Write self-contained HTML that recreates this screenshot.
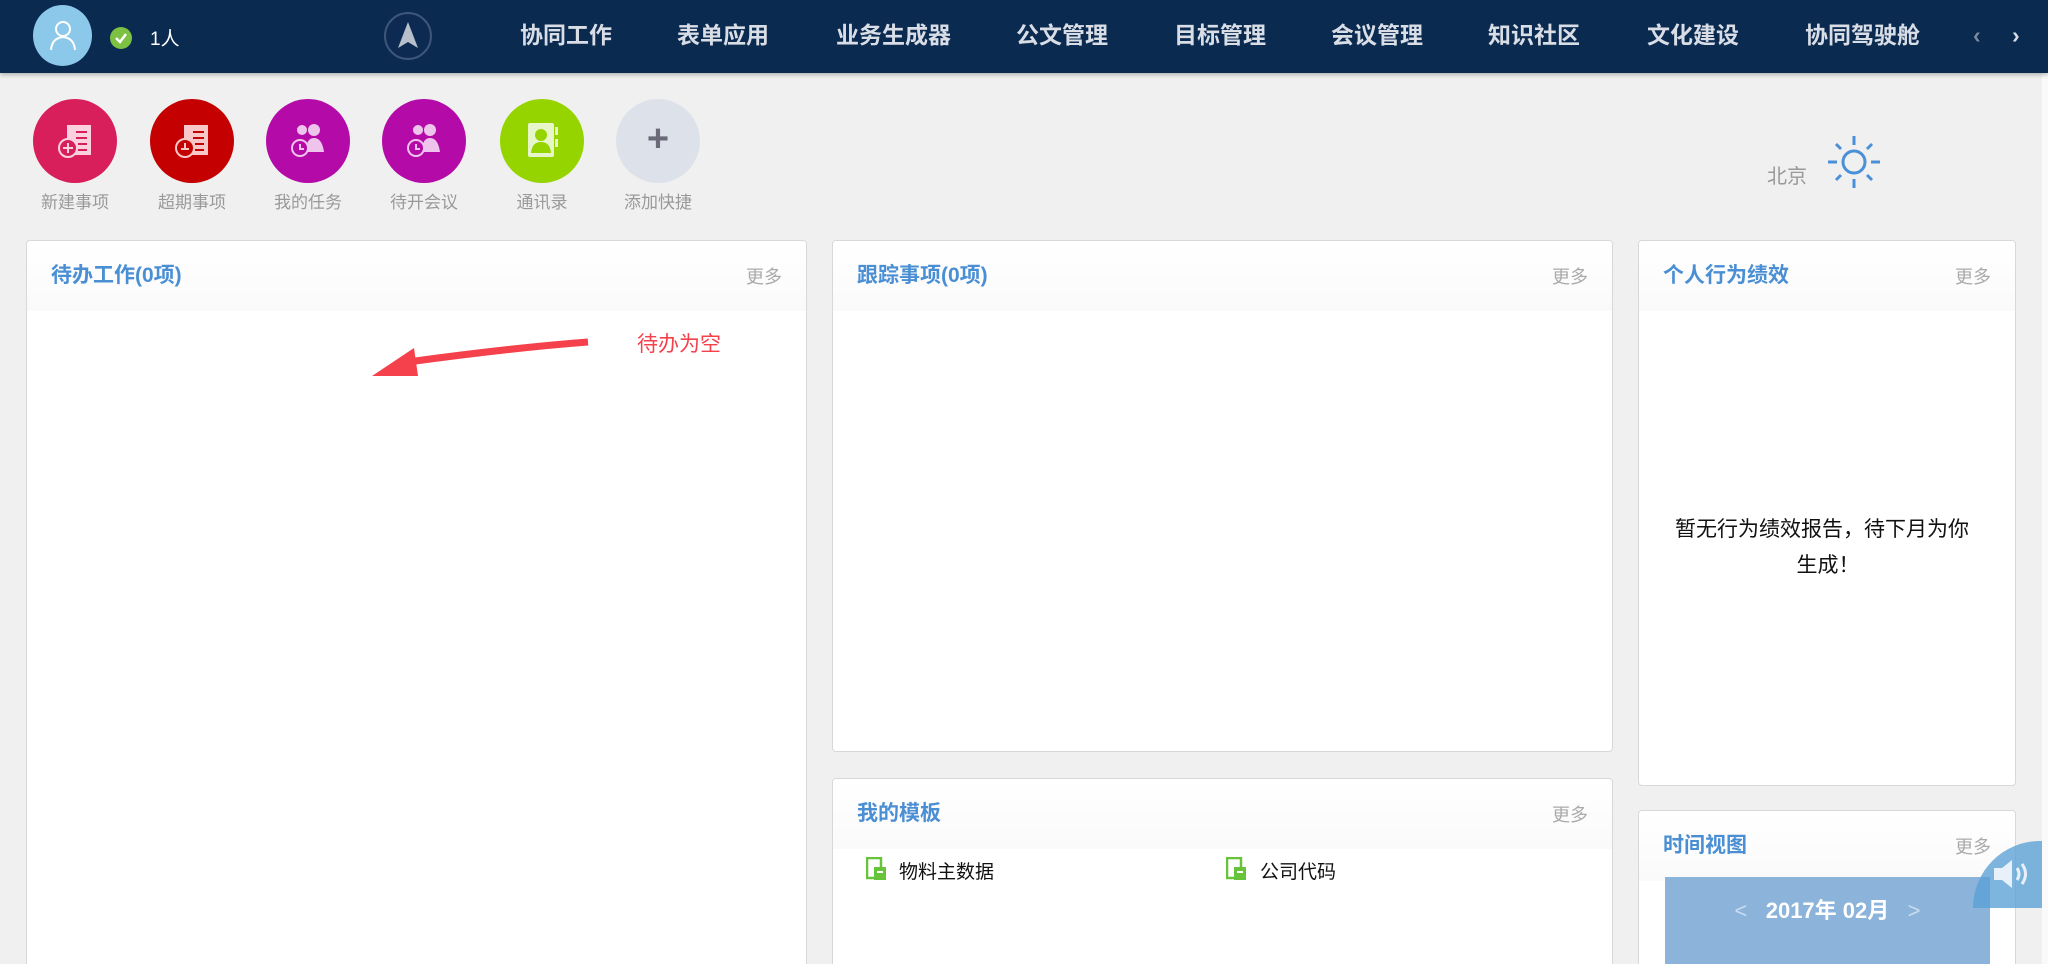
<!DOCTYPE html>
<html style="overflow:hidden;width:2048px;height:964px"><head><meta charset="utf-8"><style>
*{margin:0;padding:0;box-sizing:border-box}
body{width:2048px;height:964px;overflow:hidden;background:#f0f0f0;font-family:"Liberation Sans","Noto Sans CJK SC",sans-serif;position:relative}
.nav{position:absolute;left:0;top:0;width:2048px;height:73px;background:#0b2a50;box-shadow:0 2px 4px rgba(0,0,0,.25);z-index:2}
.nav .it{position:absolute;top:21px;color:#d8dde6;font-size:23px;line-height:28px;font-weight:bold}
.abs{position:absolute}
.sc{position:absolute;top:99px;width:84px;height:84px;border-radius:50%}
.lbl{position:absolute;top:188px;width:120px;text-align:center;color:#999;font-size:17px}
.panel{position:absolute;background:#fff;border:1px solid #d8d8d8;border-radius:4px;overflow:hidden}
.panel .hd{height:70px;background:linear-gradient(#fff,#fafafa)}
.panel .t{position:absolute;left:24px;top:18px;color:#4a8fd4;font-size:21px;font-weight:bold}
.panel .m{position:absolute;right:24px;top:22px;color:#aaa;font-size:18px}
</style></head><body>
<div class="nav">
 <div class="abs" style="left:33px;top:5px;width:59px;height:61px;border-radius:50%;background:#8cc8ea"></div>
 <svg class="abs" style="left:48px;top:18px" width="30" height="34" viewBox="0 0 30 34"><circle cx="15" cy="11" r="7" fill="none" stroke="#fff" stroke-width="2"/><path d="M3 32 Q4 20 15 19 Q26 20 27 32" fill="none" stroke="#fff" stroke-width="2"/></svg>
 <div class="abs" style="left:110px;top:27px;width:22px;height:22px;border-radius:50%;background:#7cc142"></div>
 <svg class="abs" style="left:113px;top:30px" width="16" height="16"><path d="M3 8 L7 12 L13 4" stroke="#fff" stroke-width="2.5" fill="none"/></svg>
 <div class="abs" style="left:150px;top:24px;color:#fff;font-size:19px">1人</div>
 <div class="abs" style="left:384px;top:12px;width:48px;height:48px;border-radius:50%;border:2px solid #3d5679;background:#0d2b52"></div>
 <svg class="abs" style="left:384px;top:12px" width="48" height="48"><path d="M24 10 L34 36 L24 30 L14 36Z" fill="#b8c0cc"/></svg>
 <div class="it" style="left:520px">协同工作</div>
 <div class="it" style="left:677px">表单应用</div>
 <div class="it" style="left:836px">业务生成器</div>
 <div class="it" style="left:1016px">公文管理</div>
 <div class="it" style="left:1174px">目标管理</div>
 <div class="it" style="left:1331px">会议管理</div>
 <div class="it" style="left:1488px">知识社区</div>
 <div class="it" style="left:1647px">文化建设</div>
 <div class="it" style="left:1805px">协同驾驶舱</div>
 <div class="it" style="left:1973px;color:#7a8aa0">‹</div>
 <div class="it" style="left:2012px">›</div>
</div>

<div class="sc" style="left:33px;background:#d81e5b"></div>
<div class="sc" style="left:150px;background:#c40000"></div>
<div class="sc" style="left:266px;background:#b40aa8"></div>
<div class="sc" style="left:382px;background:#b40aa8"></div>
<div class="sc" style="left:500px;background:#96d400"></div>
<div class="sc" style="left:616px;background:#dde2ea"></div>
<svg class="abs" style="left:52px;top:118px" width="48" height="48"><rect x="15" y="7" width="24" height="30" fill="#fbd1df"/><g stroke="#d81e5b" stroke-width="2"><line x1="24" y1="14" x2="35" y2="14"/><line x1="24" y1="20" x2="35" y2="20"/><line x1="26" y1="26" x2="35" y2="26"/><line x1="26" y1="32" x2="35" y2="32"/></g><circle cx="16" cy="30" r="9" fill="#d81e5b" stroke="#fbd1df" stroke-width="2"/><path d="M11 30h10M16 25v10" stroke="#fbd1df" stroke-width="2"/></svg>
<svg class="abs" style="left:169px;top:118px" width="48" height="48"><rect x="15" y="7" width="24" height="30" fill="#f8c8c8"/><g stroke="#c40000" stroke-width="2"><line x1="24" y1="14" x2="35" y2="14"/><line x1="24" y1="20" x2="35" y2="20"/><line x1="26" y1="26" x2="35" y2="26"/><line x1="26" y1="32" x2="35" y2="32"/></g><circle cx="16" cy="30" r="9" fill="#c40000" stroke="#f8c8c8" stroke-width="2"/><path d="M16 25v7M12 31h8" stroke="#f8c8c8" stroke-width="2"/></svg>
<svg class="abs" style="left:284px;top:118px" width="48" height="48"><circle cx="18" cy="12" r="5" fill="#efc4ec"/><circle cx="30" cy="12" r="6" fill="#efc4ec"/><path d="M22 34 Q22 20 30 20 Q38 20 40 34Z" fill="#efc4ec"/><circle cx="16" cy="30" r="8" fill="#b40aa8" stroke="#efc4ec" stroke-width="2"/><path d="M16 26v5h4" stroke="#efc4ec" stroke-width="2" fill="none"/></svg>
<svg class="abs" style="left:400px;top:118px" width="48" height="48"><circle cx="18" cy="12" r="5" fill="#efc4ec"/><circle cx="30" cy="12" r="6" fill="#efc4ec"/><path d="M22 34 Q22 20 30 20 Q38 20 40 34Z" fill="#efc4ec"/><circle cx="16" cy="30" r="8" fill="#b40aa8" stroke="#efc4ec" stroke-width="2"/><path d="M16 26v5h4" stroke="#efc4ec" stroke-width="2" fill="none"/></svg>
<svg class="abs" style="left:518px;top:117px" width="48" height="48"><rect x="10" y="6" width="26" height="34" rx="2" fill="#e6f6c8"/><rect x="37" y="10" width="3" height="8" fill="#e6f6c8"/><rect x="37" y="22" width="3" height="8" fill="#e6f6c8"/><circle cx="23" cy="18" r="6" fill="#96d400"/><path d="M13 36 Q14 25 23 25 Q32 25 33 36Z" fill="#96d400"/></svg>
<div class="abs" style="left:616px;top:119px;width:84px;text-align:center;color:#6a6a78;font-size:38px;font-weight:bold;line-height:40px">+</div>
<div class="lbl" style="left:15px">新建事项</div>
<div class="lbl" style="left:132px">超期事项</div>
<div class="lbl" style="left:248px">我的任务</div>
<div class="lbl" style="left:364px">待开会议</div>
<div class="lbl" style="left:482px">通讯录</div>
<div class="lbl" style="left:598px">添加快捷</div>

<div class="abs" style="left:1767px;top:160px;color:#999;font-size:20px">北京</div>
<svg class="abs" style="left:1824px;top:132px" width="60" height="60"><circle cx="30" cy="30" r="11" fill="none" stroke="#4a90d9" stroke-width="3"/><g stroke="#4a90d9" stroke-width="3"><line x1="30" y1="4" x2="30" y2="13"/><line x1="30" y1="47" x2="30" y2="56"/><line x1="4" y1="30" x2="13" y2="30"/><line x1="47" y1="30" x2="56" y2="30"/><line x1="12" y1="12" x2="17" y2="17"/><line x1="43" y1="43" x2="48" y2="48"/><line x1="48" y1="12" x2="43" y2="17"/><line x1="12" y1="48" x2="17" y2="43"/></g></svg>

<div class="panel" style="left:26px;top:240px;width:781px;height:724px;border-bottom:none;border-radius:4px 4px 0 0"><div class="hd"></div><div class="t">待办工作(0项)</div><div class="m">更多</div></div>
<div class="panel" style="left:832px;top:240px;width:781px;height:512px"><div class="hd"></div><div class="t">跟踪事项(0项)</div><div class="m">更多</div></div>
<div class="panel" style="left:832px;top:778px;width:781px;height:186px;border-bottom:none;border-radius:4px 4px 0 0"><div class="hd"></div><div class="t">我的模板</div><div class="m">更多</div>
 <svg class="abs" style="left:33px;top:78px" width="22" height="24"><rect x="1" y="1" width="14" height="20" fill="none" stroke="#66c33a" stroke-width="2.5"/><rect x="8" y="10" width="12" height="13" fill="#66c33a"/><rect x="11" y="14" width="6" height="2" fill="#fff"/></svg>
 <div class="abs" style="left:66px;top:78px;font-size:19px;color:#111">物料主数据</div>
 <svg class="abs" style="left:393px;top:78px" width="22" height="24"><rect x="1" y="1" width="14" height="20" fill="none" stroke="#66c33a" stroke-width="2.5"/><rect x="8" y="10" width="12" height="13" fill="#66c33a"/><rect x="11" y="14" width="6" height="2" fill="#fff"/></svg>
 <div class="abs" style="left:427px;top:78px;font-size:19px;color:#111">公司代码</div>
</div>
<div class="panel" style="left:1638px;top:240px;width:378px;height:546px"><div class="hd"></div><div class="t">个人行为绩效</div><div class="m">更多</div>
 <div class="abs" style="left:36px;top:272px;width:340px;white-space:nowrap;font-size:21px;color:#111">暂无行为绩效报告，待下月为你</div>
 <div class="abs" style="left:0;top:308px;width:378px;text-align:center;font-size:21px;color:#111">生成！</div>
</div>
<div class="panel" style="left:1638px;top:810px;width:378px;height:154px;border-bottom:none;border-radius:4px 4px 0 0"><div class="hd"></div><div class="t">时间视图</div><div class="m">更多</div>
 <div class="abs" style="left:26px;top:66px;width:325px;height:88px;background:#8cb3da;color:#fff;text-align:center;font-size:22px;font-weight:bold;padding-top:16px"><span style="color:#c9dcef;font-weight:normal">&lt;</span>&nbsp;&nbsp; 2017年 02月 &nbsp;&nbsp;<span style="color:#c9dcef;font-weight:normal">&gt;</span></div>
</div>
<div class="abs" style="left:2042px;top:73px;width:6px;height:891px;background:#fafafa"></div>
<div class="abs" style="left:1973px;top:841px;width:69px;height:67px;border-top-left-radius:69px;background:rgba(90,160,214,.78)"></div>
<svg class="abs" style="left:1992px;top:856px" width="44" height="36"><path d="M2 12h8l10-8v28l-10-8H2z" fill="#e8f1fa"/><path d="M25 12 q4 6 0 12M30 8 q7 10 0 20" stroke="#e8f1fa" stroke-width="3" fill="none"/></svg>

<svg class="abs" style="left:360px;top:330px" width="240" height="60"><path d="M228 12 Q150 18 48 32" stroke="#f5414b" stroke-width="7" fill="none"/><path d="M12 46 L54 18 L58 46Z" fill="#f5414b"/></svg>
<div class="abs" style="left:637px;top:328px;color:#f5414b;font-size:21px">待办为空</div>
</body></html>
